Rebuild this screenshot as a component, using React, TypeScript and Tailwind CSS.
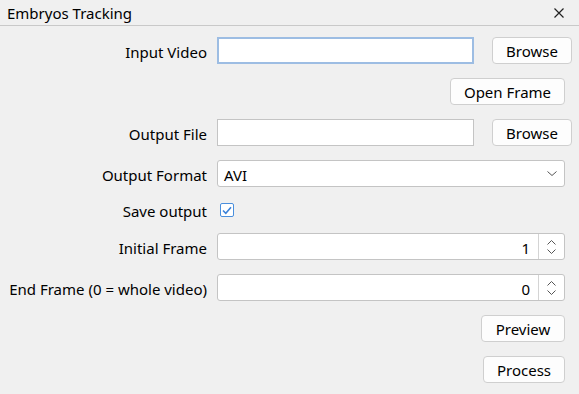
import React from 'react';

const Label = ({ text }: { text: string }) => (
  <div className="w-[200px] shrink-0 pt-[3px] text-right leading-none">{text}</div>
);

const Button = ({ text, w }: { text: string; w: string }) => (
  <button
    className={`${w} h-[27px] shrink-0 rounded-[4px] border border-[#cfcfcf] bg-[#fdfdfd] pt-[2px] leading-none text-black`}
  >
    {text}
  </button>
);

const SpinBox = ({ value }: { value: string }) => (
  <div className="flex h-[27px] w-[348px] rounded-[3px] border border-[#c4c4c4] bg-white">
    <div className="flex flex-1 items-center justify-end pr-[8px] pt-[3px] leading-none">{value}</div>
    <div className="flex w-[26px] flex-col items-center justify-center gap-[4px] border-l border-[#d4d4d4]">
      <svg width="9" height="5" viewBox="0 0 9 5" fill="none" stroke="#555" strokeWidth="1">
        <path d="M0.5 4.5 L4.5 0.5 L8.5 4.5" />
      </svg>
      <svg width="9" height="5" viewBox="0 0 9 5" fill="none" stroke="#555" strokeWidth="1">
        <path d="M0.5 0.5 L4.5 4.5 L8.5 0.5" />
      </svg>
    </div>
  </div>
);

export default function App() {
  return (
    <div
      className="h-[394px] w-[579px] overflow-hidden bg-[#f0f0f0] text-[15px] text-black"
      style={{ fontFamily: '"Noto Sans", "Open Sans", sans-serif' }}
    >
      {/* Barre de titre */}
      <div className="flex h-[26px] items-center justify-between border-b border-[#c9c9c9] pl-[7px] pr-[15px]">
        <span className="pt-[2px] leading-none">Embryos Tracking</span>
        <svg width="10" height="10" viewBox="0 0 10 10" stroke="#222" strokeWidth="1.2">
          <path d="M0.5 0.5 L9.5 9.5 M9.5 0.5 L0.5 9.5" />
        </svg>
      </div>

      {/* Formulaire */}
      <div className="flex flex-col gap-[14px] pl-[7px] pt-[11px]">
        <div className="flex h-[27px] items-center gap-[10px]">
          <Label text="Input Video" />
          <div className="h-[27px] w-[257px] border-2 border-[#9dbde3] bg-white" />
          <div className="ml-[8px]">
            <Button text="Browse" w="w-[80px]" />
          </div>
        </div>

        <div className="flex h-[27px] justify-end pr-[14px]">
          <Button text="Open Frame" w="w-[115px]" />
        </div>

        <div className="flex h-[27px] items-center gap-[10px]">
          <Label text="Output File" />
          <div className="h-[27px] w-[257px] border border-[#c4c4c4] bg-white" />
          <div className="ml-[8px]">
            <Button text="Browse" w="w-[80px]" />
          </div>
        </div>

        <div className="flex h-[27px] items-center gap-[10px]">
          <Label text="Output Format" />
          <div className="flex h-[27px] w-[348px] items-center justify-between rounded-[3px] border border-[#c4c4c4] bg-white pl-[6px] pr-[7px]">
            <span className="pt-[3px] leading-none">AVI</span>
            <svg width="10" height="5" viewBox="0 0 10 5" fill="none" stroke="#555" strokeWidth="1">
              <path d="M0.5 0.5 L5 4.5 L9.5 0.5" />
            </svg>
          </div>
        </div>

        <div className="flex h-[18px] items-center gap-[10px]">
          <Label text="Save output" />
          <div className="ml-[3px] flex h-[14px] w-[14px] items-center justify-center rounded-[2px] border border-[#4a8fdd] bg-white">
            <svg width="10" height="9" viewBox="0 0 10 9" fill="none" stroke="#3b82d9" strokeWidth="1.6">
              <path d="M1 4.5 L3.8 7.3 L9 1.2" />
            </svg>
          </div>
        </div>

        <div className="flex h-[27px] items-center gap-[10px]">
          <Label text="Initial Frame" />
          <SpinBox value="1" />
        </div>

        <div className="flex h-[27px] items-center gap-[10px]">
          <Label text="End Frame (0 = whole video)" />
          <SpinBox value="0" />
        </div>

        <div className="flex h-[27px] justify-end pr-[14px]">
          <Button text="Preview" w="w-[84px]" />
        </div>

        <div className="flex h-[27px] justify-end pr-[14px]">
          <Button text="Process" w="w-[82px]" />
        </div>
      </div>
    </div>
  );
}
